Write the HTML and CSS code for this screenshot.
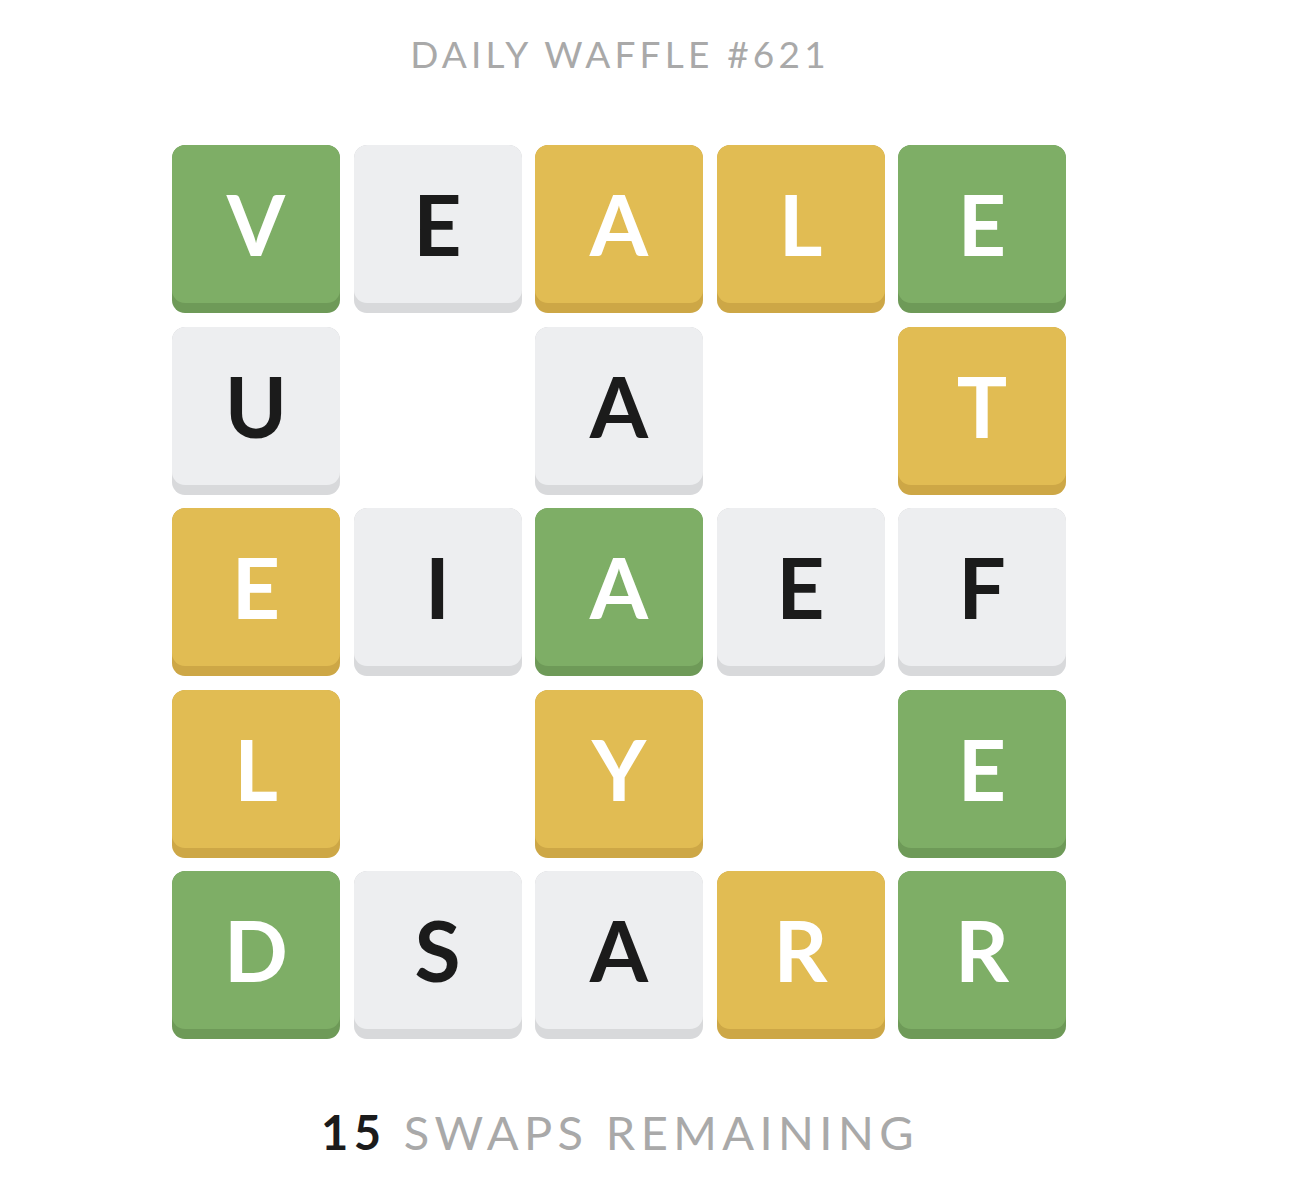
FILE: index.html
```html
<!DOCTYPE html>
<html lang="en">
<head>
<meta charset="utf-8">
<title>Daily Waffle #621</title>
<link rel="stylesheet" href="styles.css">
</head>
<body>
<main class="page">
  <h1 class="title">DAILY WAFFLE #621</h1>
  <div class="board">
    <div class="tile green"><span class="face">V</span></div>
    <div class="tile gray"><span class="face">E</span></div>
    <div class="tile yellow"><span class="face">A</span></div>
    <div class="tile yellow"><span class="face">L</span></div>
    <div class="tile green"><span class="face">E</span></div>

    <div class="tile gray"><span class="face">U</span></div>
    <div class="hole"></div>
    <div class="tile gray"><span class="face">A</span></div>
    <div class="hole"></div>
    <div class="tile yellow"><span class="face">T</span></div>

    <div class="tile yellow"><span class="face">E</span></div>
    <div class="tile gray"><span class="face">I</span></div>
    <div class="tile green"><span class="face">A</span></div>
    <div class="tile gray"><span class="face">E</span></div>
    <div class="tile gray"><span class="face">F</span></div>

    <div class="tile yellow"><span class="face">L</span></div>
    <div class="hole"></div>
    <div class="tile yellow"><span class="face">Y</span></div>
    <div class="hole"></div>
    <div class="tile green"><span class="face">E</span></div>

    <div class="tile green"><span class="face">D</span></div>
    <div class="tile gray"><span class="face">S</span></div>
    <div class="tile gray"><span class="face">A</span></div>
    <div class="tile yellow"><span class="face">R</span></div>
    <div class="tile green"><span class="face">R</span></div>
  </div>
  <p class="swaps"><span class="count">15</span> SWAPS REMAINING</p>
</main>
</body>
</html>
```
FILE: styles.css
```css
html, body {
  margin: 0;
  padding: 0;
  background: #ffffff;
}

.page {
  width: 1240px;
  display: flex;
  flex-direction: column;
  align-items: center;
  font-family: "Lato", "Noto Sans", sans-serif;
}

.title {
  margin: 34px 0 0 0;
  font-size: 37px;
  line-height: 40px;
  font-weight: 400;
  letter-spacing: 4.2px;
  color: #a9a9a9;
}

.board {
  margin-top: 71px;
  margin-right: 2px;
  display: grid;
  grid-template-columns: repeat(5, 168px);
  grid-template-rows: repeat(5, 168px);
  gap: 13.5px;
}

.tile {
  border-radius: 13px;
  display: flex;
  flex-direction: column;
  padding-bottom: 10px;
  box-sizing: border-box;
  overflow: hidden;
}

.face {
  flex: 1;
  border-radius: 13px;
  display: flex;
  align-items: center;
  justify-content: center;
  font-size: 84px;
  font-weight: 700;
  line-height: 1;
}

.green {
  background: #6e9a58;
  color: #ffffff;
}
.green .face {
  background: #7eae66;
}

.yellow {
  background: #cda746;
  color: #ffffff;
}
.yellow .face {
  background: #e1bc53;
}

.gray {
  background: #d8d9db;
  color: #1b1b1b;
}
.gray .face {
  background: #edeef0;
}

.swaps {
  margin: 68px 0 0 0;
  font-size: 47px;
  line-height: 50px;
  letter-spacing: 5.4px;
  color: #a9a9a9;
  font-weight: 400;
}

.count {
  color: #1b1b1b;
  font-weight: 700;
}
```
